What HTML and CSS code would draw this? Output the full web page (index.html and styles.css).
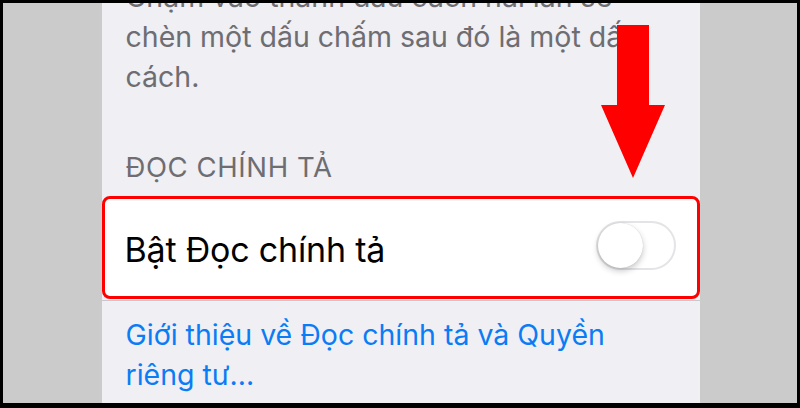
FILE: index.html
```html
<!DOCTYPE html>
<html lang="vi">
<head>
<meta charset="utf-8">
<title>Đọc chính tả</title>
<link rel="stylesheet" href="styles.css">
</head>
<body>
<div class="frame">
  <div class="backdrop">
    <div class="panel">
      <p class="footer-text">Chạm vào thanh dấu cách hai lần sẽ<br>chèn một dấu chấm sau đó là một dấu<br>cách.</p>
      <div class="section-header">ĐỌC CHÍNH TẢ</div>
      <div class="cell">
        <span class="cell-label">Bật Đọc chính tả</span>
        <span class="toggle"><span class="knob"></span></span>
      </div>
      <div class="separator"></div>
      <p class="link-text">Giới thiệu về Đọc chính tả và Quyền<br>riêng tư...</p>
      <svg class="arrow" width="64" height="153" viewBox="0 0 64 153" aria-hidden="true">
        <polygon points="16,0 48,0 48,80 64,80 32,153 0,80 16,80" fill="#ff0000"/>
      </svg>
    </div>
  </div>
</div>
</body>
</html>
```

FILE: styles.css
```css
html, body {
  margin: 0;
  padding: 0;
  background: #000;
}
body {
  width: 800px;
  height: 408px;
  overflow: hidden;
  font-family: Inter, "Liberation Sans", sans-serif;
}
.frame {
  box-sizing: border-box;
  width: 800px;
  height: 408px;
  padding: 3px 3px 5px 3px;
  background: #000;
}
.backdrop {
  height: 100%;
  background: #cbcbcb;
  display: flex;
  justify-content: center;
  padding-left: 1px;
}
.panel {
  position: relative;
  width: 598px;
  height: 100%;
  background: #efeff4;
  overflow: hidden;
}
.footer-text {
  margin: -26px 0 0 0;
  padding-left: 24px;
  font-size: 28.5px;
  line-height: 40px;
  color: #6d6d72;
  white-space: nowrap;
}
.section-header {
  margin-top: 54px;
  padding-left: 24px;
  font-size: 27.5px;
  line-height: 32px;
  letter-spacing: 0.6px;
  color: #6d6d72;
}
.cell {
  box-sizing: border-box;
  margin-top: 13px;
  height: 103px;
  background: #fff;
  border: 3px solid #ff0000;
  border-radius: 8px;
  display: flex;
  align-items: center;
  justify-content: space-between;
  padding: 4px 21px 0 20px;
}
.cell-label {
  font-size: 34px;
  color: #000;
  letter-spacing: -0.2px;
}
.toggle {
  box-sizing: border-box;
  width: 80px;
  height: 49px;
  border: 2px solid #e4e4e7;
  border-radius: 25px;
  background: #fff;
  display: flex;
  align-items: center;
  margin-top: -8px;
}
.knob {
  width: 45px;
  height: 45px;
  border-radius: 50%;
  background: #fff;
  box-shadow: 0 3px 6px rgba(0,0,0,0.22), 0 0 1px rgba(0,0,0,0.18);
}
.separator {
  margin-top: 1px;
  height: 1px;
  background: #c8c7cc;
}
.link-text {
  margin: 14px 0 0 0;
  padding-left: 24px;
  font-size: 28.5px;
  line-height: 40px;
  color: #0a7cf5;
  white-space: nowrap;
}
.arrow {
  position: absolute;
  left: 499px;
  top: 22px;
}
```
